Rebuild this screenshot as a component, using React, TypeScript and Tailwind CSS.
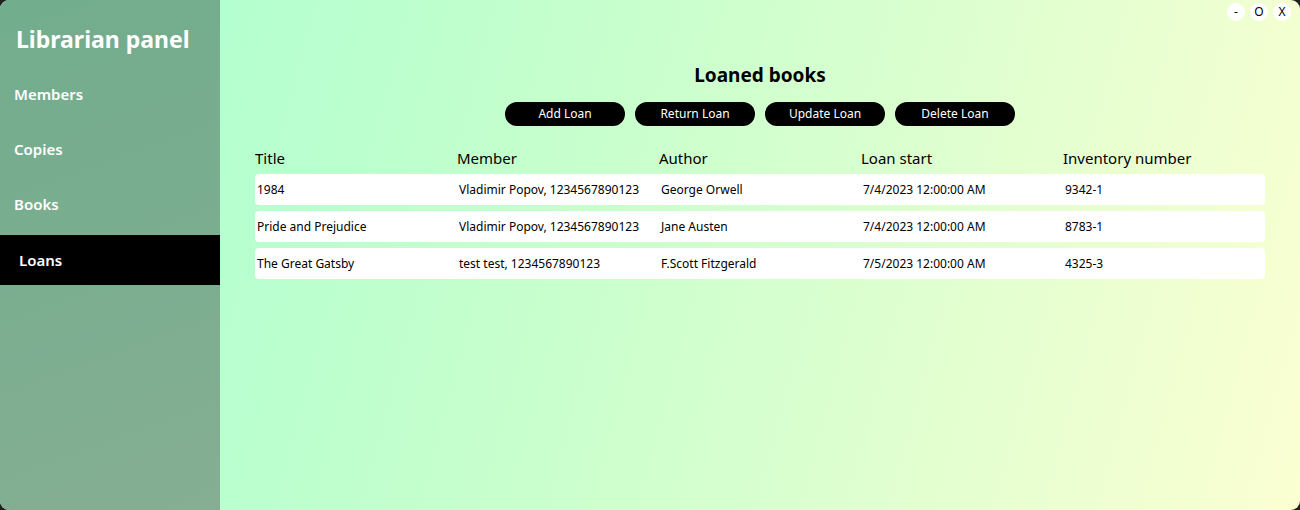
import React from "react";

const rows = [
  ["1984", "Vladimir Popov, 1234567890123", "George Orwell", "7/4/2023 12:00:00 AM", "9342-1"],
  ["Pride and Prejudice", "Vladimir Popov, 1234567890123", "Jane Austen", "7/4/2023 12:00:00 AM", "8783-1"],
  ["The Great Gatsby", "test test, 1234567890123", "F.Scott Fitzgerald", "7/5/2023 12:00:00 AM", "4325-3"],
];

const headers = ["Title", "Member", "Author", "Loan start", "Inventory number"];

export default function App() {
  return (
    <div className="w-[1300px] h-[510px] bg-[#202020] font-['Noto_Sans',sans-serif]">
      <div className="relative w-full h-full rounded-[9px] overflow-hidden flex bg-[linear-gradient(105deg,#a9ffd0_0%,#c8ffcd_45%,#fbffd2_100%)]">
        <aside className="w-[220px] h-full flex flex-col bg-[linear-gradient(160deg,#71ad8d,#85ae92)]">
          <h1 className="text-white font-bold text-[23px] leading-none pl-[16px] pt-[28px] h-[67px]">Librarian panel</h1>
          <div className="flex flex-col">
            {["Members", "Copies", "Books"].map((n) => (
              <div key={n} className="h-[55px] flex items-center pl-[14px] text-white font-semibold text-[15px]">{n}</div>
            ))}
            <div className="h-[50px] mt-[3px] flex items-center pl-[19px] bg-black text-white font-semibold text-[15px]">Loans</div>
          </div>
        </aside>
        <main className="flex-1 flex flex-col items-center pt-[62px] px-[35px]">
          <h2 className="font-bold text-[19px] leading-[26px] text-black">Loaned books</h2>
          <div className="flex gap-[10px] mt-[14px]">
            {["Add Loan", "Return Loan", "Update Loan", "Delete Loan"].map((b) => (
              <button key={b} className="w-[120px] h-[24px] rounded-full bg-black text-white text-[12px] leading-none">{b}</button>
            ))}
          </div>
          <div className="w-full mt-[20px]">
            <div className="grid grid-cols-5 h-[24px] items-center">
              {headers.map((h) => (
                <div key={h} className="text-[15px] text-black">{h}</div>
              ))}
            </div>
            <div className="flex flex-col gap-[6px] mt-[4px]">
              {rows.map((r) => (
                <div key={r[0]} className="grid grid-cols-5 h-[31px] items-center bg-white rounded-[4px]">
                  {r.map((c, i) => (
                    <div key={i} className="pl-[2px] text-[12px] text-black">{c}</div>
                  ))}
                </div>
              ))}
            </div>
          </div>
        </main>
        <div className="absolute top-[3px] right-[9px] flex gap-[5px]">
          {["-", "O", "X"].map((c) => (
            <div key={c} className="w-[18px] h-[18px] rounded-full bg-white flex items-center justify-center text-[12px] text-black">{c}</div>
          ))}
        </div>
      </div>
    </div>
  );
}
